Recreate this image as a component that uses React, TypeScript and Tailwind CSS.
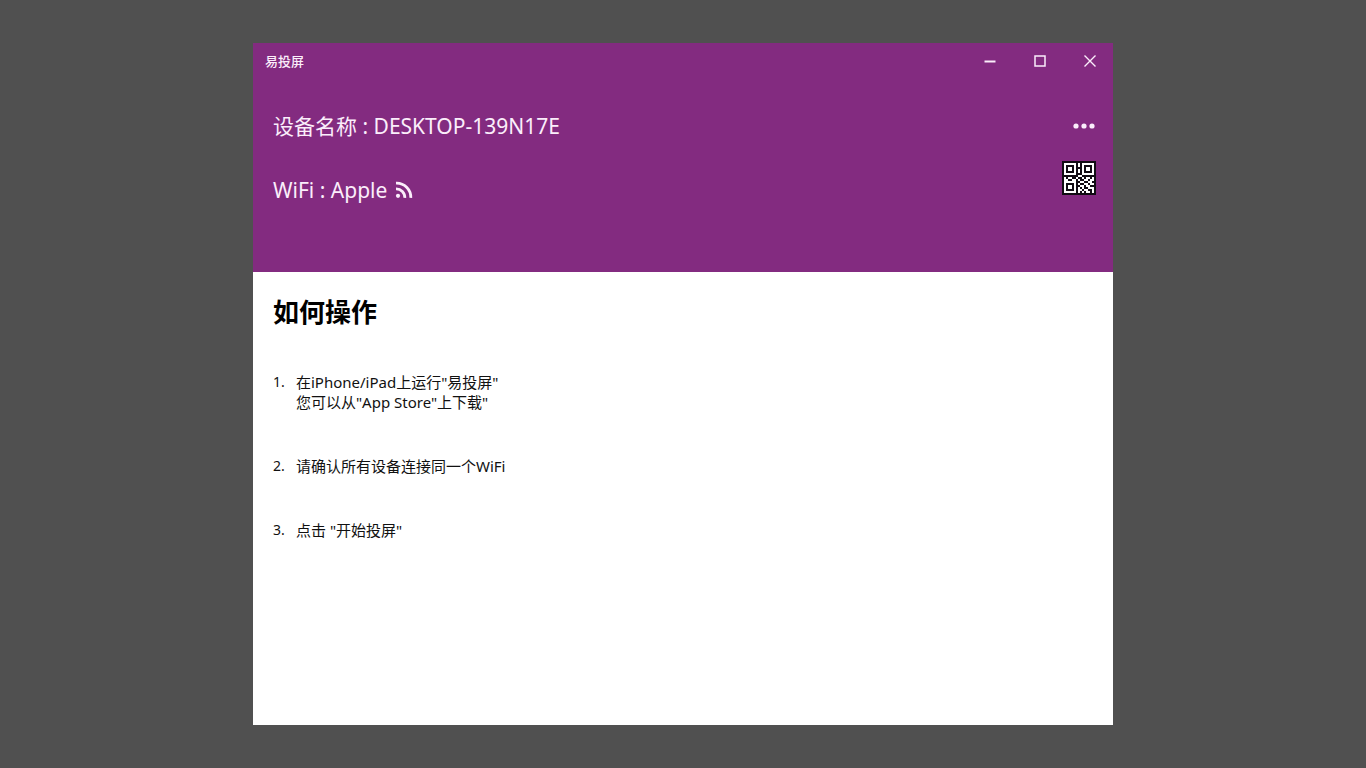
import type { ReactNode } from "react";

const qrRows = [
  "00000000000000000",
  "00000000100000000",
  "00000000100000000",
  "00000000000000000",
  "00000000100000000",
  "00000000100000000",
  "00000000000000000",
  "00000000110000000",
  "01011001001011010",
  "01100110100110110",
  "00000000011001100",
  "00000000100110110",
  "00000000011011000",
  "00000000101001110",
  "00000000110110010",
  "00000000101011010",
  "00000000000000000"
];

const steps = [
  ['在iPhone/iPad上运行"易投屏"', '您可以从"App Store"上下载"'],
  ["请确认所有设备连接同一个WiFi"],
  ['点击 "开始投屏"']
];

function WindowButton({ label, children }: { label: string; children: ReactNode }) {
  return (
    <button type="button" aria-label={label} className="flex h-9 w-[46px] items-center justify-center hover:bg-white/10">
      <svg width="12" height="12" viewBox="0 0 12 12" fill="none" stroke="currentColor" strokeWidth="1.5">
        {children}
      </svg>
    </button>
  );
}

function QrFinder({ x, y }: { x: number; y: number }) {
  return (
    <>
      <rect x={x + 1} y={y + 1} width="10" height="10" fill="none" stroke="#fff" strokeWidth="2" />
      <rect x={x + 4} y={y + 4} width="4" height="4" fill="#fff" />
    </>
  );
}

function QrCode() {
  return (
    <svg width="34" height="34" viewBox="0 0 34 34" role="img" aria-label="二维码">
      <rect width="34" height="34" fill="#120c14" />
      {qrRows.map((row, y) =>
        row.split("").map((cell, x) => cell === "1" && <rect key={`${x}-${y}`} x={x * 2} y={y * 2} width="2" height="2" fill="#fff" />)
      )}
      <QrFinder x={2} y={2} />
      <QrFinder x={20} y={2} />
      <QrFinder x={2} y={20} />
    </svg>
  );
}

function CastIcon() {
  return (
    <svg width="18" height="18" viewBox="0 0 18 18" fill="none" stroke="currentColor" strokeWidth="2.8">
      <circle cx="3" cy="14.8" r="2.1" fill="currentColor" stroke="none" />
      <path d="M1 7.8a8.6 8.6 0 0 1 8.8 9.1" />
      <path d="M1 2.2a14.2 14.2 0 0 1 14.8 14.7" />
    </svg>
  );
}

export default function App() {
  return (
    <div className="flex min-h-screen justify-center bg-[#505050] py-[43px] font-['Noto_Sans','Noto_Sans_CJK_SC',sans-serif]">
      <main className="w-full max-w-[860px] bg-white">
        <header className="bg-[#832b80] text-[#fbeefb]">
          <div className="flex items-center justify-between pl-3">
            <span className="text-[13px] leading-5 font-medium">易投屏</span>
            <div className="flex gap-1">
              <WindowButton label="最小化">
                <path d="M.5 6.5h11" strokeWidth="2" />
              </WindowButton>
              <WindowButton label="最大化">
                <rect x="1" y="1" width="10" height="10" />
              </WindowButton>
              <WindowButton label="关闭">
                <path d="M.5.5l11 11M11.5.5l-11 11" strokeWidth="1.4" />
              </WindowButton>
            </div>
          </div>

          <div className="flex justify-between pt-[33px] pr-[17px] pb-[68px] pl-5">
            <div className="grid content-start gap-9 text-[21px] leading-7">
              <p>设备名称 : DESKTOP-139N17E</p>
              <p className="flex items-center gap-2">
                WiFi : Apple
                <CastIcon />
              </p>
            </div>

            <div className="flex flex-col items-end gap-[21px]">
              <button type="button" aria-label="更多" className="flex h-7 items-center">
                <svg width="24" height="6" viewBox="0 0 24 6" fill="currentColor">
                  <circle cx="4" cy="3" r="2.6" />
                  <circle cx="12" cy="3" r="2.6" />
                  <circle cx="20" cy="3" r="2.6" />
                </svg>
              </button>
              <QrCode />
            </div>
          </div>
        </header>

        <section className="px-5 pt-6 pb-10 text-[#111]">
          <h1 className="text-[26px] leading-8 font-bold text-black">如何操作</h1>
          <ol className="mt-11 grid gap-11 text-[15px] leading-5">
            {steps.map((lines, index) => (
              <li key={index} className="flex">
                <span className="w-[23px] text-sm leading-5">{index + 1}.</span>
                <div>
                  {lines.map((line) => (
                    <p key={line}>{line}</p>
                  ))}
                </div>
              </li>
            ))}
          </ol>
        </section>
      </main>
    </div>
  );
}
